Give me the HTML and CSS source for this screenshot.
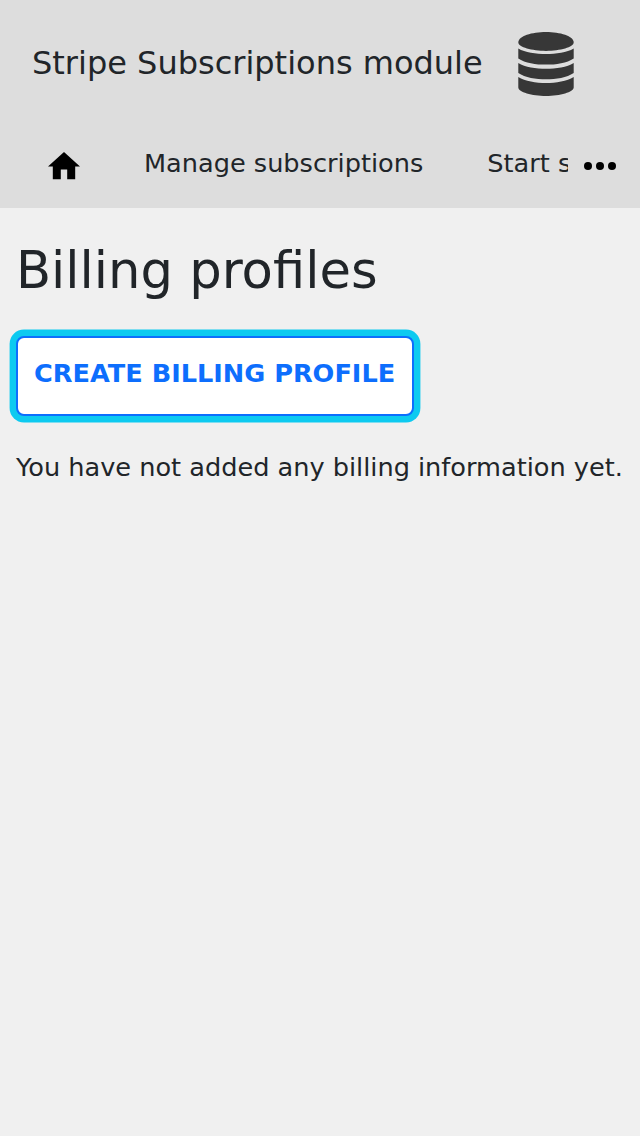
FILE: index.html
```html
<!DOCTYPE html>
<html lang="en">
<head>
<meta charset="utf-8">
<title>Billing profiles</title>
<link rel="stylesheet" href="styles.css">
</head>
<body>
<header class="header">
  <div class="brand">
    <span class="brand-title">Stripe Subscriptions module</span>
    <svg class="brand-icon" viewBox="0 0 56 64" aria-hidden="true">
      <path d="M.3 10.500C.3 4 14 0 28 0s27.700 4 27.700 10.500C55.700 15 42 18.900 28 18.900S.3 15 .3 10.500z"/>
      <path d="M.3 16.400C7 20.500 18 21.900 28 21.900s21-1.400 27.700-5.500v10C49 31 38 32.600 28 32.600S7 31 .3 26.400z"/>
      <path d="M.3 31C7 35.200 18 36.700 28 36.700s21-1.500 27.700-5.700v10C49 45.700 38 47.300 28 47.300S7 45.700.3 41z"/>
      <path d="M.3 45C7 49.300 18 51 28 51s21-1.700 27.700-6v10.500C55.700 60 42 64 28 64S.3 60 .3 55.500z"/>
    </svg>
  </div>
  <nav class="nav">
    <div class="nav-items">
      <a class="home" aria-label="Home"><svg class="home-icon" viewBox="2 3 20 17"><path d="M10 20v-6h4v6h5v-8h3L12 3 2 12h3v8z"/></svg></a>
      <a class="nav-link">Manage subscriptions</a>
      <a class="nav-link">Start subscription</a>
    </div>
    <svg class="more" viewBox="0 0 32 8"><circle cx="4" cy="4" r="4"/><circle cx="16" cy="4" r="4"/><circle cx="28" cy="4" r="4"/></svg>
  </nav>
</header>
<main class="content">
  <h1 class="title">Billing profiles</h1>
  <button class="create" type="button">CREATE BILLING PROFILE</button>
  <p class="message">You have not added any billing information yet.</p>
</main>
</body>
</html>
```

FILE: styles.css
```css
* { box-sizing: border-box; }
body {
  margin: 0;
  min-height: 1136px;
  background: #f0f0f0;
  color: #212529;
  font: 25.6px/38.4px "DejaVu Sans", sans-serif;
}
.header { height: 208px; background: #ddd; }
.brand { display: flex; align-items: center; height: 128px; padding-left: 32px; }
.brand-title { width: 450px; font-size: 32px; line-height: 48px; white-space: nowrap; padding-bottom: 2px; }
.brand-icon { width: 56px; height: 64px; margin-left: 36px; fill: #373737; }
.nav { display: flex; height: 80px; }
.nav-items { display: flex; width: 568px; overflow: hidden; white-space: nowrap; padding-top: 16px; }
.home { flex: none; padding: 8.4px 32px 0 48px; }
.home-icon { display: block; width: 32px; height: 27.2px; }
.nav-link { flex: none; padding: 0 32px; }
.more { width: 32px; height: 8px; margin: 34px 0 0 16px; }
.content { padding: 32px 16px; }
.title { margin: 0 0 34.6px; font-size: 51.2px; font-weight: 400; line-height: 61.4px; }
.create {
  display: block;
  width: 398px;
  height: 80px;
  margin: 0 0 32px;
  padding: 0 16px 6px;
  border: 2px solid #0d6efd;
  border-radius: 8px;
  background: #fff;
  box-shadow: 0 0 0 6.4px #0dcaf0;
  color: #0d6efd;
  font: bold 25.6px/38.4px "DejaVu Sans", sans-serif;
  text-align: left;
  white-space: nowrap;
}
.message { margin: 0; white-space: nowrap; }
```
